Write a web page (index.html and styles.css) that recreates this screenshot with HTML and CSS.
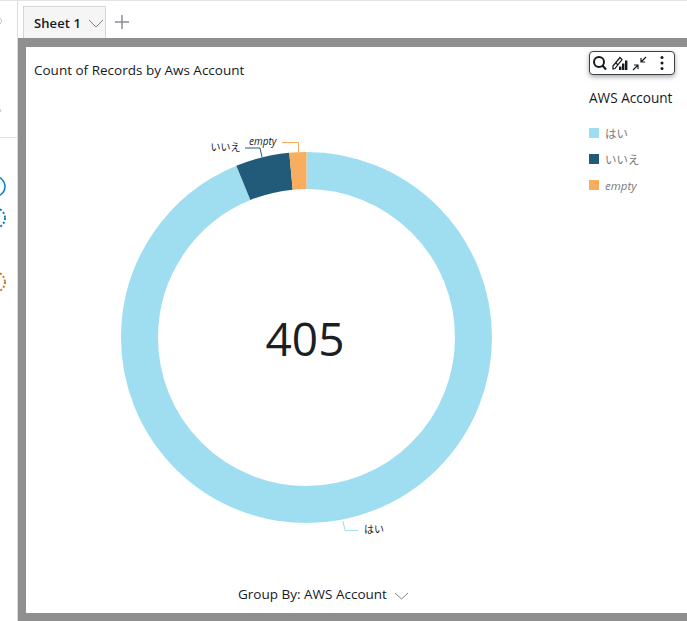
FILE: index.html
```html
<!DOCTYPE html>
<html lang="ja">
<head>
<meta charset="utf-8">
<title>Sheet 1</title>
<link rel="stylesheet" href="styles.css">
</head>
<body>
<div class="app">
  <aside class="sidebar">
    <svg class="side-art" width="17" height="621" viewBox="0 0 17 621">
      <path d="M0 18 L2 21 L0 24" class="side-chev"/>
      <path d="M0 109 L1 112" class="side-chev"/>
      <line x1="0" y1="137.5" x2="17" y2="137.5" class="side-rule"/>
      <circle cx="-5" cy="186.500" r="10" class="ring-solid"/>
      <circle cx="-5" cy="218" r="10" class="ring-blue"/>
      <circle cx="-5" cy="282" r="10" class="ring-orange"/>
    </svg>
  </aside>
  <main class="main">
    <nav class="tabs">
      <div class="tab">
        <span class="tab-name">Sheet 1</span>
        <svg class="chev" width="16" height="9" viewBox="0 0 16 9"><path d="M1 1 L8 8 L15 1"/></svg>
      </div>
      <svg class="plus" width="14" height="14" viewBox="0 0 14 14"><path d="M7 0 V14 M0 7 H14"/></svg>
    </nav>
    <section class="panel">
      <h1 class="title">Count of Records by Aws Account</h1>
      <div class="toolbar">
        <svg width="16" height="16" viewBox="0 0 16 16" class="tool tool-search"><circle cx="7" cy="7" r="5" class="tool-line"/><path d="M10.500 10.500 L14 14.500" class="tool-line"/></svg>
        <svg width="16" height="16" viewBox="0 0 16 16" class="tool tool-pen"><path d="M1 11 L8 2.500 L10 4.500 L3 13.500 L1 14 Z M4 8 L6 10" class="tool-thin"/><rect x="7" y="11.500" width="2.400" height="3.500"/><rect x="10" y="8.500" width="2.400" height="6.500"/><rect x="13" y="5.500" width="2.400" height="9.500"/></svg>
        <svg width="15" height="15" viewBox="0 0 15 15" class="tool tool-arrows"><path d="M14 1 L9 6 M9 2 V6 H13 M1 14 L6 9 M2 9 H6 V13" class="tool-thin"/></svg>
        <svg width="12" height="16" viewBox="0 0 12 16" class="tool tool-more"><circle cx="6" cy="2.500" r="1.500"/><circle cx="6" cy="8" r="1.500"/><circle cx="6" cy="13.500" r="1.500"/></svg>
      </div>
      <svg class="chart" width="563" height="482" viewBox="0 0 563 482">
        <g fill="none" transform="rotate(-90 280.500 244.500)">
          <circle cx="280.500" cy="244.500" r="167" pathLength="405" stroke-width="37" stroke-dasharray="380 25" stroke-dashoffset="0" class="seg-hai"/>
          <circle cx="280.500" cy="244.500" r="167" pathLength="405" stroke-width="37" stroke-dasharray="19 386" stroke-dashoffset="-380" class="seg-iie"/>
          <circle cx="280.500" cy="244.500" r="167" pathLength="405" stroke-width="37" stroke-dasharray="6 399" stroke-dashoffset="-399" class="seg-empty"/>
        </g>
        <path d="M236 64 L234 55 L219 55" class="lead lead-iie"/>
        <path d="M256 49.500 L272.500 49.500 L272.500 59" class="lead lead-empty"/>
        <path d="M317 428 L319 437.500 L332 437.500" class="lead lead-hai"/>
        <text x="184.500" y="58" class="lbl">いいえ</text>
        <text x="223" y="52" class="lbl lbl-empty">empty</text>
        <text x="338" y="440" class="lbl">はい</text>
        <text x="279" y="263" text-anchor="middle" class="total">405</text>
      </svg>
      <aside class="legend">
        <h2 class="legend-title">AWS Account</h2>
        <ul class="legend-list">
          <li class="legend-item"><span class="swatch swatch-hai"></span>はい</li>
          <li class="legend-item"><span class="swatch swatch-iie"></span>いいえ</li>
          <li class="legend-item legend-empty"><span class="swatch swatch-empty"></span>empty</li>
        </ul>
      </aside>
      <div class="groupby">
        <span>Group By: AWS Account</span>
        <svg class="chev" width="15" height="8" viewBox="0 0 15 8"><path d="M1 1 L7.500 7 L14 1"/></svg>
      </div>
    </section>
  </main>
</div>
</body>
</html>
```

FILE: styles.css
```css
* { box-sizing: border-box; }
html, body { margin: 0; height: 100%; overflow: hidden; background: #fff; }
body { font-family: "Open Sans", "Noto Sans CJK JP", sans-serif; color: #16191f; }

.app { display: flex; height: 621px; width: 687px; border-top: 1px solid #e4e4e4; }
.sidebar { width: 18px; flex: none; border-right: 1px solid #dcdcdc; overflow: hidden; }
.side-art { display: block; margin-top: -1px; }
.side-chev { fill: none; stroke: #c4c4c4; stroke-width: 1; }
.side-rule { stroke: #e2e2e2; stroke-width: 1; }
.ring-solid { fill: none; stroke: #0a84c6; stroke-width: 1.500; }
.ring-blue { fill: none; stroke: #0a7cbc; stroke-width: 2; stroke-dasharray: 2 2; }
.ring-orange { fill: none; stroke: #c9782a; stroke-width: 2; stroke-dasharray: 2 2; }

.main { flex: 1; min-width: 0; display: flex; flex-direction: column; }
.tabs { height: 37px; flex: none; display: flex; align-items: center; padding: 5px 0 0 5px; }
.tab { width: 83px; height: 32px; background: #f5f5f5; border: 1px solid #d5d5d5; border-bottom: 0; display: flex; align-items: center; padding: 1px 0 0 10px; gap: 7px; }
.tab-name { font-size: 13px; font-weight: 600; letter-spacing: 0.1px; white-space: nowrap; }
.chev { flex: none; fill: none; }
.chev path { fill: none; stroke: #7d8389; stroke-width: 1; }
.plus { margin: 0 0 0 9px; flex: none; }
.plus path { fill: none; stroke: #8a8f94; stroke-width: 1.500; }

.panel { flex: 1; min-height: 0; position: relative; border: 8px solid #8f8f8f; border-top-width: 9px; border-right: 0; display: grid; grid-template-columns: 563px 1fr; grid-template-rows: 46px 482px 1fr; background: #fff; }
.title { grid-column: 1 / 3; margin: 0; padding: 14px 0 0 8px; font-size: 13.500px; line-height: 18px; font-weight: 400; color: #16191f; white-space: nowrap; }

.toolbar { position: absolute; left: 563px; top: 4px; width: 86px; height: 24px; background: #fff; border: 1px solid #3c3f44; border-radius: 4px; box-shadow: 0 2px 5px rgba(0,0,0,.35); display: flex; align-items: center; padding-left: 2px; }
.tool { flex: none; fill: #16191f; }
.tool-pen { margin-left: 4px; }
.tool-arrows { margin-left: 4px; }
.tool-more { margin-left: 9px; }
.tool-line { fill: none; stroke: #16191f; stroke-width: 2; }
.tool-thin { fill: none; stroke: #16191f; stroke-width: 1.200; }

.chart { display: block; grid-column: 1; grid-row: 2; }
.seg-hai { stroke: #9fdef1; }
.seg-iie { stroke: #215b79; }
.seg-empty { stroke: #f8ae5e; }
.lead { fill: none; stroke-width: 1; }
.lead-iie { stroke: #215b79; }
.lead-empty { stroke: #f8ae5e; }
.lead-hai { stroke: #9fdef1; }
.lbl { font-size: 10px; fill: #16191f; }
.lbl-empty { font-style: italic; }
.total { font-size: 46px; fill: #1b1e23; }

.legend { grid-column: 2; grid-row: 2; margin-top: -4px; min-width: 0; }
.legend-title { margin: 0 0 18px; font-size: 13.600px; line-height: 18px; font-weight: 400; white-space: nowrap; }
.legend-list { list-style: none; margin: 0; padding: 0; display: flex; flex-direction: column; gap: 10px; }
.legend-item { display: flex; align-items: center; gap: 6px; height: 16px; font-size: 11.500px; color: #7b7b7b; white-space: nowrap; }
.legend-empty { font-style: italic; }
.swatch { width: 10px; height: 10px; flex: none; }
.swatch-hai { background: #9fdef1; }
.swatch-iie { background: #215b79; }
.swatch-empty { background: #f8ae5e; }

.groupby { grid-column: 1; grid-row: 3; display: flex; align-items: center; justify-content: flex-start; padding: 0 0 0 212px; gap: 7px; font-size: 13.500px; color: #16191f; white-space: nowrap; }
.groupby .chev { margin-top: 3px; }
```
